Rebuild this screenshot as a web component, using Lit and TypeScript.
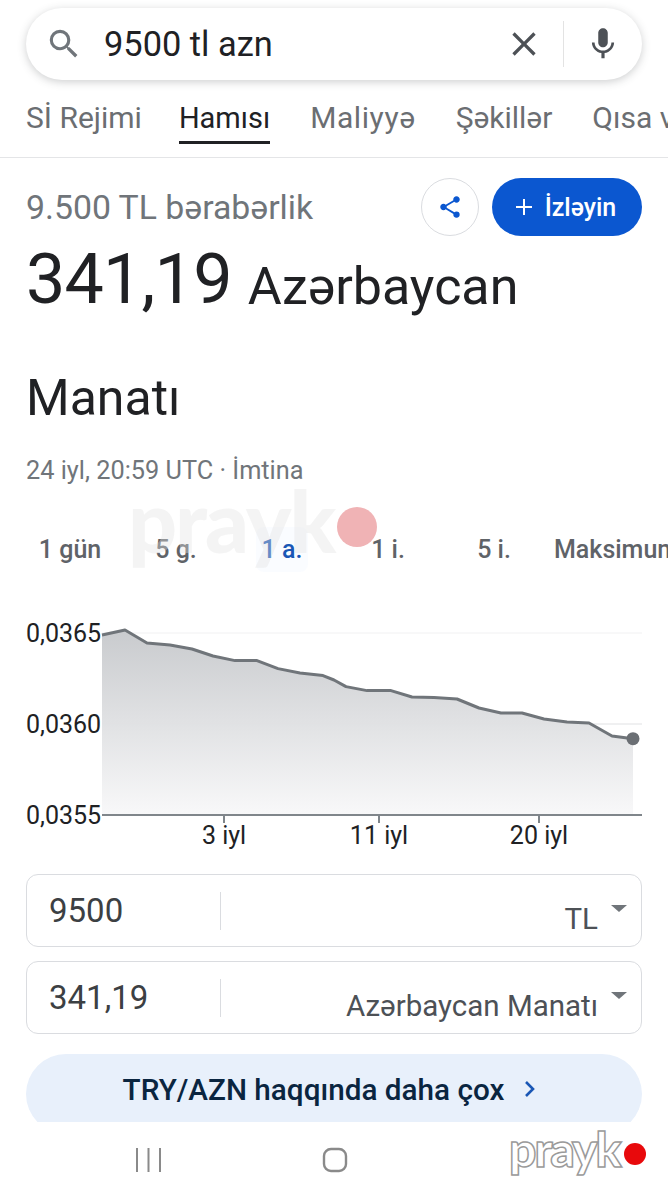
import { LitElement, html, css, svg } from "lit";
import { customElement } from "lit/decorators.js";

const LINE: [number, number][] = [
  [0, 2], [23, -3], [45, 10], [68, 12], [90, 16], [111, 23], [133, 27.6], [155, 27.6],
  [176, 35.6], [198, 40], [221, 42.6], [232, 47], [244, 53.6], [265, 57.6], [289, 57.6],
  [310, 64], [332, 64.6], [355, 66], [377, 75], [399, 80], [420, 80], [442, 86], [465, 89],
  [487, 90], [510, 103], [531, 105.7],
];

const TABS = ["Sİ Rejimi", "Hamısı", "Maliyyə", "Şəkillər", "Qısa videolar"];
const RANGES = ["1 gün", "5 g.", "1 a.", "1 i.", "5 i.", "Maksimum"];

@customElement("app-root")
export class AppRoot extends LitElement {
  static styles = css`
    :host {
      display: block;
      position: relative;
      width: 668px;
      height: 1200px;
      overflow: hidden;
      background: #fff;
      font-family: Roboto, "Noto Sans", sans-serif;
      color: #202124;
    }
    .search {
      display: flex;
      align-items: center;
      box-sizing: border-box;
      height: 72px;
      margin: 8px 26px 0;
      padding: 0 20px 0 19px;
      border-radius: 36px;
      background: #fff;
      box-shadow: 0 2px 8px rgba(60, 64, 67, 0.25);
    }
    .query {
      flex: 1;
      margin-left: 21px;
      font-size: 34.4px;
      color: #202124;
    }
    .clear {
      margin-right: 19px;
    }
    .sep {
      width: 1px;
      height: 46px;
      background: #e3e3e3;
      margin-right: 20px;
    }
    .tabs {
      display: flex;
      gap: 40px;
      height: 77px;
      padding-left: 26px;
      border-bottom: 1px solid #e4e5e7;
      overflow: hidden;
      white-space: nowrap;
    }
    .tab {
      position: relative;
      flex: none;
      padding-top: 20px;
      font-size: 30px;
      color: #6b6e72;
    }
    .tab:first-child {
      margin-right: -3px;
    }
    .tab:nth-child(3) {
      letter-spacing: 0.6px;
    }
    .tab.active {
      padding-top: 21px;
      font-size: 29px;
      color: #202124;
    }
    .tab.active::after {
      content: "";
      position: absolute;
      left: 0;
      right: 0;
      bottom: 13px;
      height: 3px;
      background: #202124;
    }
    .head {
      display: flex;
      align-items: center;
      height: 58px;
      margin: 20px 26px 0;
    }
    .equals {
      flex: 1;
      font-size: 33.8px;
      color: #70757a;
    }
    .share {
      display: flex;
      align-items: center;
      justify-content: center;
      box-sizing: border-box;
      width: 58px;
      height: 58px;
      margin-right: 13px;
      border: 1px solid #dadce0;
      border-radius: 50%;
    }
    .follow {
      display: flex;
      align-items: center;
      justify-content: center;
      gap: 12px;
      box-sizing: border-box;
      width: 150px;
      height: 58px;
      padding-right: 3px;
      border-radius: 29px;
      background: #0b57d0;
      color: #fff;
      font-size: 25px;
      font-weight: 500;
    }
    .value {
      display: flex;
      align-items: flex-start;
      height: 84px;
      margin: 0 26px;
      line-height: 84px;
      color: #202124;
    }
    .value b {
      margin: 1px 16px 0 0;
      font-size: 70px;
      font-weight: 400;
      letter-spacing: -0.8px;
    }
    .value span {
      margin-top: 9px;
      font-size: 52px;
    }
    .unit {
      margin: 36px 26px 0;
      font-size: 50px;
      line-height: 84px;
      color: #202124;
    }
    .time {
      margin: 17px 26px 0;
      font-size: 25.3px;
      line-height: 28px;
      color: #70757a;
    }
    .ranges {
      display: grid;
      grid-template-columns: repeat(6, 106px);
      align-items: center;
      justify-items: center;
      height: 40px;
      margin: 42px 0 0 17px;
      font-size: 25px;
      font-weight: 500;
      color: #5f6368;
      white-space: nowrap;
    }
    .ranges .on {
      padding: 8px 6px;
      border-radius: 8px;
      background: rgba(232, 240, 254, 0.2);
      color: #1a57b5;
    }
    .ranges .last {
      justify-self: start;
      margin-left: 7px;
    }
    .chart {
      display: block;
      margin-top: 48px;
    }
    .chart text {
      font-family: Roboto, "Noto Sans", sans-serif;
      font-size: 25px;
      fill: #202124;
    }
    .field {
      display: flex;
      align-items: center;
      box-sizing: border-box;
      height: 73px;
      margin: 0 26px 14px;
      border: 1px solid #dadce0;
      border-radius: 12px;
    }
    .amount {
      box-sizing: border-box;
      width: 193px;
      padding-left: 22px;
      font-size: 33px;
      color: #3c4043;
    }
    .divider {
      width: 1px;
      height: 38px;
      background: #dadce0;
    }
    .currency {
      flex: 1;
      padding-top: 16px;
      font-size: 29.5px;
      text-align: right;
      color: #4d5156;
    }
    .caret {
      width: 0;
      height: 0;
      margin: 0 14px 0 13px;
      border-left: 8px solid transparent;
      border-right: 8px solid transparent;
      border-top: 7px solid #70757a;
      transform: translateY(-2px);
    }
    .more {
      display: flex;
      align-items: center;
      justify-content: center;
      gap: 19px;
      box-sizing: border-box;
      height: 80px;
      margin: 20px 26px -12px;
      padding: 0 8px 10px 0;
      border-radius: 40px;
      clip-path: inset(0 0 12px 0);
      background: #e8f0fb;
      color: #0a2540;
      font-size: 29.7px;
      font-weight: 500;
    }
    .nav {
      display: flex;
      align-items: center;
      gap: 161px;
      height: 24px;
      margin-top: 26px;
      padding-left: 135px;
    }
    .mark {
      position: absolute;
      font-family: Lato, Roboto, sans-serif;
      letter-spacing: -2px;
      line-height: 1;
      white-space: nowrap;
    }
    .mark.big {
      left: 128px;
      top: 477px;
      font-size: 86px;
      font-weight: 900;
      color: rgba(225, 225, 225, 0.38);
    }
    .dot {
      position: absolute;
      border-radius: 50%;
    }
    .dot.big {
      left: 337px;
      top: 507px;
      width: 40px;
      height: 40px;
      background: #f0b3b5;
    }
    .mark.small {
      left: 509px;
      top: 1125px;
      font-size: 48px;
      font-weight: 900;
      color: #fff;
      -webkit-text-stroke: 1.5px #9a9a9a;
    }
    .dot.small {
      left: 624px;
      top: 1143px;
      width: 22px;
      height: 22px;
      background: #e8090c;
    }
  `;

  private chart() {
    const pts = LINE.map(([x, y]) => `${x},${y}`).join(" ");
    return svg`
      <svg class="chart" width="668" height="259" viewBox="-102 -18 668 259">
        <defs>
          <linearGradient id="fill" x1="0" y1="0" x2="0" y2="1">
            <stop offset="0" stop-color="#c9cbce" />
            <stop offset="1" stop-color="#f8f8f9" />
          </linearGradient>
        </defs>
        <line x1="0" y1="0" x2="540" y2="0" stroke="#f1f1f2" />
        <polygon points="0,181 ${pts} 531,181" fill="url(#fill)" />
        <line x1="0" y1="91" x2="540" y2="91" stroke="#e0e1e3" />
        <polyline points=${pts} fill="none" stroke="#70757a" stroke-width="3" stroke-linejoin="round" />
        <circle cx="531" cy="105.7" r="6.5" fill="#6b6f74" />
        <line x1="0" y1="182" x2="540" y2="182" stroke="#80868b" stroke-width="2" />
        ${[122, 277, 437].map((x) => svg`<line x1=${x} y1="182" x2=${x} y2="190" stroke="#80868b" stroke-width="2" />`)}
        <text x="-76" y="9">0,0365</text>
        <text x="-76" y="100">0,0360</text>
        <text x="-76" y="191">0,0355</text>
        <text x="122" y="211" text-anchor="middle">3 iyl</text>
        <text x="277" y="211" text-anchor="middle">11 iyl</text>
        <text x="437" y="211" text-anchor="middle">20 iyl</text>
      </svg>
    `;
  }

  render() {
    return html`
      <div class="search">
        <svg width="38" height="38" viewBox="0 0 24 24" fill="#70757a">
          <path d="M15.5 14h-.79l-.28-.27A6.47 6.47 0 0 0 16 9.5 6.5 6.5 0 1 0 9.5 16c1.61 0 3.09-.59 4.23-1.57l.27.28v.79l5 4.99L20.49 19l-4.99-5zm-6 0C7.01 14 5 11.99 5 9.5S7.01 5 9.5 5 14 7.01 14 9.5 11.99 14 9.5 14z" />
        </svg>
        <div class="query">9500 tl azn</div>
        <svg class="clear" width="40" height="40" viewBox="0 0 24 24" fill="#4d5156">
          <path d="M19 6.41 17.59 5 12 10.59 6.41 5 5 6.41 10.59 12 5 17.59 6.41 19 12 13.41 17.59 19 19 17.59 13.41 12z" />
        </svg>
        <div class="sep"></div>
        <svg width="38" height="38" viewBox="0 0 24 24" fill="#4d5156">
          <path d="M12 14c1.66 0 3-1.34 3-3V5c0-1.66-1.34-3-3-3S9 3.34 9 5v6c0 1.66 1.34 3 3 3zm5.3-3c0 3-2.54 5.1-5.3 5.1S6.7 14 6.7 11H5c0 3.41 2.72 6.23 6 6.72V21h2v-3.28c3.28-.49 6-3.31 6-6.72h-1.7z" />
        </svg>
      </div>

      <div class="tabs">
        ${TABS.map((t, i) => html`<div class="tab ${i === 1 ? "active" : ""}">${t}</div>`)}
      </div>

      <div class="head">
        <div class="equals">9.500 TL bərabərlik</div>
        <div class="share">
          <svg width="26" height="26" viewBox="0 0 24 24" fill="#0b57d0">
            <path d="M18 16.08c-.76 0-1.44.3-1.96.77L8.91 12.7c.05-.23.09-.46.09-.7s-.04-.47-.09-.7l7.05-4.11c.54.5 1.25.81 2.04.81 1.66 0 3-1.34 3-3s-1.34-3-3-3-3 1.34-3 3c0 .24.04.47.09.7L8.04 9.81A2.99 2.99 0 0 0 6 9c-1.66 0-3 1.34-3 3s1.34 3 3 3c.79 0 1.5-.31 2.04-.81l7.12 4.16c-.05.21-.08.43-.08.65a2.92 2.92 0 1 0 2.92-2.92z" />
          </svg>
        </div>
        <div class="follow">
          <svg width="18" height="18" viewBox="0 0 18 18" stroke="#fff" stroke-width="2">
            <path d="M9 1v16M1 9h16" />
          </svg>
          <span>İzləyin</span>
        </div>
      </div>

      <div class="value"><b>341,19</b><span>Azərbaycan</span></div>
      <div class="unit">Manatı</div>
      <div class="time">24 iyl, 20:59 UTC · İmtina</div>

      <div class="ranges">
        ${RANGES.map(
          (r, i) => html`<div class="${i === 2 ? "on" : ""} ${i === 5 ? "last" : ""}">${r}</div>`
        )}
      </div>

      ${this.chart()}

      <div class="field">
        <div class="amount">9500</div>
        <div class="divider"></div>
        <div class="currency">TL</div>
        <div class="caret"></div>
      </div>
      <div class="field">
        <div class="amount">341,19</div>
        <div class="divider"></div>
        <div class="currency">Azərbaycan Manatı</div>
        <div class="caret"></div>
      </div>

      <div class="more">
        <span>TRY/AZN haqqında daha çox</span>
        <svg width="14" height="18" viewBox="0 0 14 18" fill="none" stroke="#1a57b5" stroke-width="2.6">
          <path d="M3 2l7 7-7 7" />
        </svg>
      </div>

      <div class="nav">
        <svg width="26" height="24" viewBox="0 0 26 24" stroke="#8a8a8a" stroke-width="2">
          <path d="M2 0v24M13.5 0v24M25 0v24" />
        </svg>
        <svg width="26" height="26" viewBox="0 0 26 26" fill="none" stroke="#8a8a8a" stroke-width="2.4">
          <rect x="2" y="2" width="22" height="22" rx="7" />
        </svg>
      </div>

      <div class="mark big">prayk</div>
      <div class="dot big"></div>
      <div class="mark small">prayk</div>
      <div class="dot small"></div>
    `;
  }
}
